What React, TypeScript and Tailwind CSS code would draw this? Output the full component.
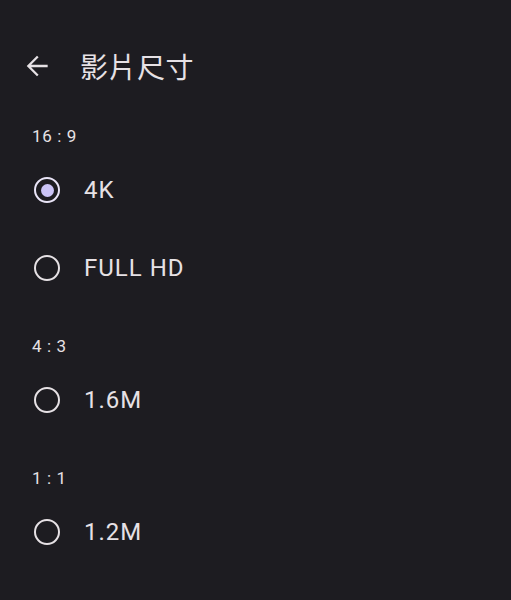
import React, { useState } from 'react'

type Option = { id: string; label: string };
type Section = { title: string; options: Option[] };

const sections: Section[] = [
  {
    title: "16 : 9",
    options: [
      { id: "4k", label: "4K" },
      { id: "fhd", label: "FULL HD" },
    ],
  },
  { title: "4 : 3", options: [{ id: "16m", label: "1.6M" }] },
  { title: "1 : 1", options: [{ id: "12m", label: "1.2M" }] },
];

const Radio = ({ checked }: { checked: boolean }) => (
  <div
    className={`w-[26px] h-[26px] rounded-full border-[2.6px] flex items-center justify-center ${
      checked ? "border-[#e9e4f7]" : "border-[#e6e1e5]"
    }`}
  >
    {checked && <div className="w-[13px] h-[13px] rounded-full bg-[#cbc3f6]" />}
  </div>
);

const App: React.FC = () => {
  const [selected, setSelected] = useState("4k");
  return (
    <div
      className="w-[511px] h-[600px] bg-[#1d1c21] text-[#e6e1e5] overflow-hidden"
      style={{ fontFamily: "Roboto, 'Noto Sans CJK TC', sans-serif" }}
    >
      <div className="mt-[38px] h-[56px] flex items-center">
        <button className="ml-[21px] w-[32px] h-[32px] flex items-center justify-center">
          <svg width="32" height="32" viewBox="0 0 24 24" fill="#e6e1e5">
            <path d="M20 11.1H7.6l5.6-5.6L12 4.3 4.3 12l7.7 7.7 1.2-1.2-5.6-5.6H20v-1.8z" />
          </svg>
        </button>
        <h1 className="ml-[27px] text-[28px] leading-none tracking-[0.5px] font-['Noto_Sans_CJK_TC',sans-serif]">
          影片尺寸
        </h1>
      </div>
      <div className="flex flex-col pt-[3px]">
        {sections.map((s) => (
          <div key={s.title} className="pt-[24px]">
            <div className="h-[30px] flex items-center pl-[32px] text-[17px] tracking-[0.6px] pt-[2px]">
              {s.title}
            </div>
            {s.options.map((o) => (
              <div
                key={o.id}
                onClick={() => setSelected(o.id)}
                className="h-[78px] flex items-center cursor-pointer"
              >
                <div className="ml-[34px]">
                  <Radio checked={selected === o.id} />
                </div>
                <span className="ml-[24px] text-[24px] tracking-[1px]">{o.label}</span>
              </div>
            ))}
          </div>
        ))}
      </div>
    </div>
  );
};

export default App;
